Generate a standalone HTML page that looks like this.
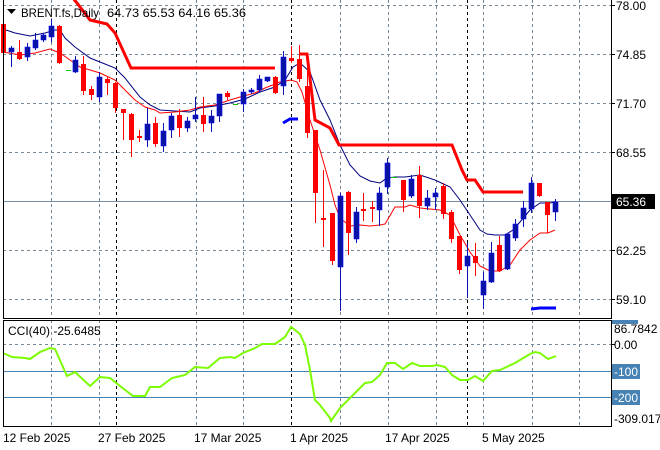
<!DOCTYPE html>
<html><head><meta charset="utf-8"><style>
html,body{margin:0;padding:0;background:#fff;width:660px;height:450px;overflow:hidden}
svg{display:block}
text{font-family:"Liberation Sans",sans-serif;font-size:12px;fill:#000}
</style></head><body>
<svg width="660" height="450" viewBox="0 0 660 450" xmlns="http://www.w3.org/2000/svg">
<rect width="660" height="450" fill="#fff"/>
<g stroke="#778899" stroke-dasharray="3,3" stroke-width="1" fill="none">
<path d="M3 5.5H611M3 54.5H611M3 103.5H611M3 152.5H611M3 250.5H611M3 299.5H611"/>
<path d="M51.5 0V318M99.5 0V318M196.5 0V318M243.5 0V318M340.5 0V318M388.5 0V318M436.5 0V318M483.5 0V318M532.5 0V318M579.5 0V318"/>
<path d="M51.5 320V426M99.5 320V426M196.5 320V426M243.5 320V426M340.5 320V426M388.5 320V426M436.5 320V426M483.5 320V426M532.5 320V426M579.5 320V426M3 344.5H611"/>
</g>
<g stroke="#000" stroke-dasharray="3,3" fill="none">
<path d="M116.5 0V318M291.5 0V318M467.5 0V318M116.5 320V426M291.5 320V426M467.5 320V426"/>
</g>
<path d="M3 201.5H611" stroke="#7890a8" stroke-width="1"/>
<path d="M3 371.5H611M3 397.5H611" stroke="#4682b4" stroke-width="1"/>
<polyline fill="none" stroke="#000080" stroke-width="1" points="3,29 15,33 30,36 45,33 55,30 60,30 65,38 75,47 90,58 100,62 115,68 125,78 140,97 150,105 160,110 175,111 190,112 200,108 215,106 230,103 245,99 260,92 275,87 285,80 293,67 300,63 310,72 320,100 330,120 340,145 350,165 360,176 370,181 380,183 387,178 395,177 405,177 420,175 435,180 450,187 460,200 470,215 480,230 487,234 495,235 505,235 513,230 520,222 530,210 540,203 550,203 555,202"/>
<polyline fill="none" stroke="#ff0000" stroke-width="1" points="3,52 20,55 35,53 50,49 60,53 70,60 80,67 90,70 100,73 115,80 125,90 135,100 145,107 155,110 160,113 175,112 190,110 200,107 215,105 230,100 240,97 255,93 265,88 280,82 291,80 297,82 302,92 310,120 320,150 330,185 335,205 340,218 350,226 360,225 370,226 380,225 385,224 395,207 405,207 410,205 420,208 430,209 440,210 450,215 460,235 470,252 480,266 490,271 500,271 510,265 520,250 530,240 540,233 548,233 555,230"/>
<polyline fill="none" stroke="#ff0000" stroke-width="3" points="72,-3 77,3 90,20 107,24 115,33 131,68 275,68"/>
<polyline fill="none" stroke="#ff0000" stroke-width="3" points="299,54 307,54 315,120 330,128 339,145 452,145 462,170 467,180 475,180 483,192 523,192"/>
<polyline fill="none" stroke="#0000ff" stroke-width="3" points="283,123 290,119 298,119"/>
<polyline fill="none" stroke="#0000ff" stroke-width="3" points="531,309 540,308 556,308"/>
<path d="M66 70.5h5M233 104.5h5M391 177.5h6" stroke="#00c000" stroke-width="1"/>
<path fill="none" stroke="#0a14b4" stroke-width="1" d="M11.5 46V67M27.5 43V61M35.5 33V50M43.5 33V42M51.5 19V42M75.5 56V73M99.5 72V102M147.5 108V147M163.5 123V152M171.5 113V138M187.5 117V132M195.5 97V122M211.5 110V132M219.5 94V122M243.5 89V112M251.5 88V94M259.5 75V92M267.5 77V82M283.5 51V95M340.5 193V311M356.5 207V243M379.5 187V226M387.5 158V194M411.5 175V198M427.5 190V210M435.5 188V210M467.5 243V298M483.5 272V309M491.5 242V283M507.5 233V270M515.5 219V241M523.5 201V227M531.5 177V213M555.5 199V221"/>
<path fill="#0a14a0" stroke="#0000ff" stroke-width="0.6" d="M9 48h5v4h-5zM25 47h5v10h-5zM33 40h5v8h-5zM41 35h5v5h-5zM49 26h5v11h-5zM73 60h5v12h-5zM97 77h5v20h-5zM145 124h5v16h-5zM161 131h5v15h-5zM169 116h5v14h-5zM185 121h5v7h-5zM193 115h5v4h-5zM209 116h5v7h-5zM217 94h5v22h-5zM241 92h5v12h-5zM249 90h5v2h-5zM257 79h5v11h-5zM265 77h5v4h-5zM281 57h5v29h-5zM338 196h5v71h-5zM354 212h5v27h-5zM377 193h5v17h-5zM385 163h5v24h-5zM409 179h5v17h-5zM425 198h5v8h-5zM433 193h5v4h-5zM465 256h5v10h-5zM481 281h5v14h-5zM489 253h5v29h-5zM505 234h5v35h-5zM513 224h5v14h-5zM521 208h5v11h-5zM529 183h5v26h-5zM553 202h5v10h-5z"/>
<path fill="none" stroke="#ff0000" stroke-width="1" d="M3.5 20V55M19.5 40V60M59.5 25V64M83.5 56V95M91.5 86V100M107.5 77V95M115.5 82V113M123.5 109V140M131.5 113V157M139.5 130V142M155.5 117V147M179.5 109V137M203.5 97V132M227.5 91V100M275.5 76V94M291.5 46V63M299.5 45V82M307.5 54V138M315.5 130V223M323.5 170V247M332.5 213V265M348.5 191V255M363.5 193V221M372.5 201V222M403.5 180V212M419.5 166V218M443.5 183V219M451.5 210V243M459.5 236V274M475.5 243V276M499.5 236V272M539.5 183V197M547.5 202V233"/>
<path fill="#ff0000" d="M1 24h5v29h-5zM17 52h5v7h-5zM57 26h5v37h-5zM81 64h5v27h-5zM89 89h5v6h-5zM105 79h5v4h-5zM113 83h5v25h-5zM121 109h5v4h-5zM129 114h5v26h-5zM137 136h5v2h-5zM153 123h5v21h-5zM177 115h5v13h-5zM201 115h5v9h-5zM225 93h5v4h-5zM273 77h5v16h-5zM289 58h5v3h-5zM297 59h5v20h-5zM305 86h5v47h-5zM313 130h5v63h-5zM321 218h5v2h-5zM330 213h5v48h-5zM346 192h5v41h-5zM361 209h5v2h-5zM370 207h5v2h-5zM401 180h5v20h-5zM417 175h5v31h-5zM441 186h5v28h-5zM449 212h5v27h-5zM457 236h5v34h-5zM473 256h5v7h-5zM497 245h5v26h-5zM537 183h5v13h-5zM545 202h5v13h-5z"/>
<polyline fill="none" stroke="#7cfc00" stroke-width="2" points="3,353 12,357 25,358 30,359 40,352 50,348 55,349 67,376 75,372 90,386 100,377 110,378 120,386 133,396 145,396 150,387 160,387 172,378 185,375 195,367 208,368 220,358 230,357 235,358 243,353 255,348 262,344 275,344 285,337 291,327 300,334 305,345 310,370 315,400 320,405 330,418 331,421 340,408 350,398 360,388 365,383 372,382 380,375 387,363 395,363 403,369 412,363 420,366 432,366 437,365 445,367 452,375 460,380 468,380 475,376 483,381 492,371 500,370 515,363 530,354 535,352 540,353 548,359 556,356"/>
<g stroke="#000" stroke-width="1" fill="none">
<path d="M3.5 0V318.5H611.5V0"/>
<path d="M3.5 320.5H611.5V426.5H3.5Z"/>
<path d="M611 5.5h4M611 54.5h4M611 103.5h4M611 152.5h4M611 250.5h4M611 299.5h4M611 344.5h4"/>
</g>
<path d="M7 9h9l-4.5 5z" fill="#000"/>
<text x="21" y="17" textLength="78" lengthAdjust="spacingAndGlyphs">BRENT.fs,Daily</text>
<text x="107" y="17" textLength="139" lengthAdjust="spacingAndGlyphs">64.73 65.53 64.16 65.36</text>
<text x="8" y="335">CCI(40) -25.6485</text>
<g>
<text x="616" y="10">78.00</text>
<text x="616" y="59">74.85</text>
<text x="616" y="108">71.70</text>
<text x="616" y="157">68.55</text>
<rect x="612" y="194" width="43" height="15" fill="#000"/>
<text x="616" y="206" style="fill:#fff">65.36</text>
<text x="616" y="255">62.25</text>
<text x="616" y="304">59.10</text>
<rect x="612" y="320" width="26" height="4" fill="#4682b4"/>
<text x="614" y="333">86.7842</text>
<text x="614" y="349">0.00</text>
<rect x="612" y="364" width="28" height="15" fill="#4682b4"/>
<text x="614" y="376" style="fill:#fff">-100</text>
<rect x="612" y="390" width="28" height="15" fill="#4682b4"/>
<text x="614" y="402" style="fill:#fff">-200</text>
<text x="614" y="423">-309.017</text>
</g>
<text x="3" y="442">12 Feb 2025</text>
<text x="98" y="442">27 Feb 2025</text>
<text x="194" y="442">17 Mar 2025</text>
<text x="290" y="442">1 Apr 2025</text>
<text x="385" y="442">17 Apr 2025</text>
<text x="482" y="442">5 May 2025</text>
</svg>
</body></html>
